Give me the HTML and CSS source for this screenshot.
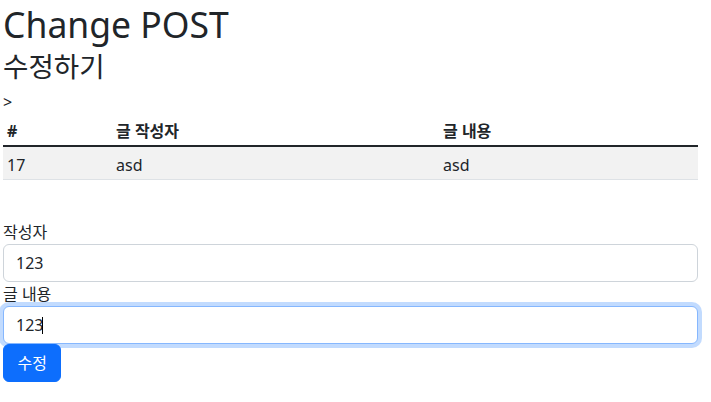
FILE: index.html
```html
<!DOCTYPE html>
<html lang="ko">
<head>
<meta charset="utf-8">
<title>Change POST</title>
<link rel="stylesheet" href="styles.css">
</head>
<body>
<div class="page">
  <h1 class="title">Change POST</h1>
  <h2 class="subtitle">수정하기</h2>
  <div class="stray">&gt;</div>
  <table class="table">
    <colgroup>
      <col class="col-num">
      <col class="col-author">
      <col class="col-content">
    </colgroup>
    <thead>
      <tr><th>#</th><th>글 작성자</th><th>글 내용</th></tr>
    </thead>
    <tbody>
      <tr class="striped"><td>17</td><td>asd</td><td>asd</td></tr>
    </tbody>
  </table>
  <div class="spacer"></div>
  <form class="form">
    <label class="label" for="writer">작성자</label>
    <input class="control" id="writer" type="text" value="123">
    <label class="label" for="content">글 내용</label>
    <div class="control-wrap">
      <input class="control focused" id="content" type="text" value="123">
      <span class="caret"></span>
    </div>
    <button class="btn" type="button">수정</button>
  </form>
</div>
</body>
</html>
```
FILE: styles.css
```css
* { box-sizing: border-box; }
html, body { margin: 0; padding: 0; background: #fff; }
body {
  font-family: "Noto Sans", "Noto Sans CJK KR", sans-serif;
  font-size: 16px;
  line-height: 1.5;
  color: #212529;
}
.page {
  width: 698px;
  padding-left: 3px;
}
.title {
  font-size: 35.5px;
  font-weight: 400;
  line-height: 48.2px;
  margin: 0;
  white-space: nowrap;
}
.subtitle {
  font-size: 27.6px;
  font-weight: 400;
  line-height: 29.1px;
  padding-top: 4px;
  margin: 0 0 8px;
}
.stray {
  height: 24px;
  padding-top: 2px;
  line-height: 22px;
  font-size: 16px;
}
.table {
  width: 100%;
  border-collapse: collapse;
  table-layout: fixed;
  margin-bottom: 16px;
}
.col-num { width: 109px; }
.col-author { width: 327px; }
.table th, .table td {
  padding: 6px 4px 2px;
  text-align: left;
  border-bottom: 1px solid #dee2e6;
  vertical-align: top;
}
.table th { font-weight: 700; }
.table thead th { border-bottom: 2px solid #212529; }
.striped td { background: #f2f2f2; }
.spacer { height: 24px; }
.form { display: flex; flex-direction: column; align-items: flex-start; }
.label { display: block; line-height: 24px; }
.control {
  display: block;
  width: 695px;
  height: 38px;
  padding: 6px 12px;
  font: inherit;
  font-size: 16px;
  line-height: 1.5;
  color: #212529;
  background: #fff;
  border: 1px solid #ced4da;
  border-radius: 6px;
  outline: none;
}
.control-wrap { position: relative; }
.focused {
  border-color: #86b7fe;
  box-shadow: 0 0 0 4px rgba(13, 110, 253, 0.25);
}
.caret {
  position: absolute;
  left: 39px;
  top: 11px;
  width: 1px;
  height: 17px;
  background: #000;
}
.btn {
  height: 38px;
  padding: 6px 13.5px;
  font: inherit;
  font-size: 16px;
  line-height: 1.5;
  color: #fff;
  background: #0d6efd;
  border: 1px solid #0d6efd;
  border-radius: 6px;
}
```
